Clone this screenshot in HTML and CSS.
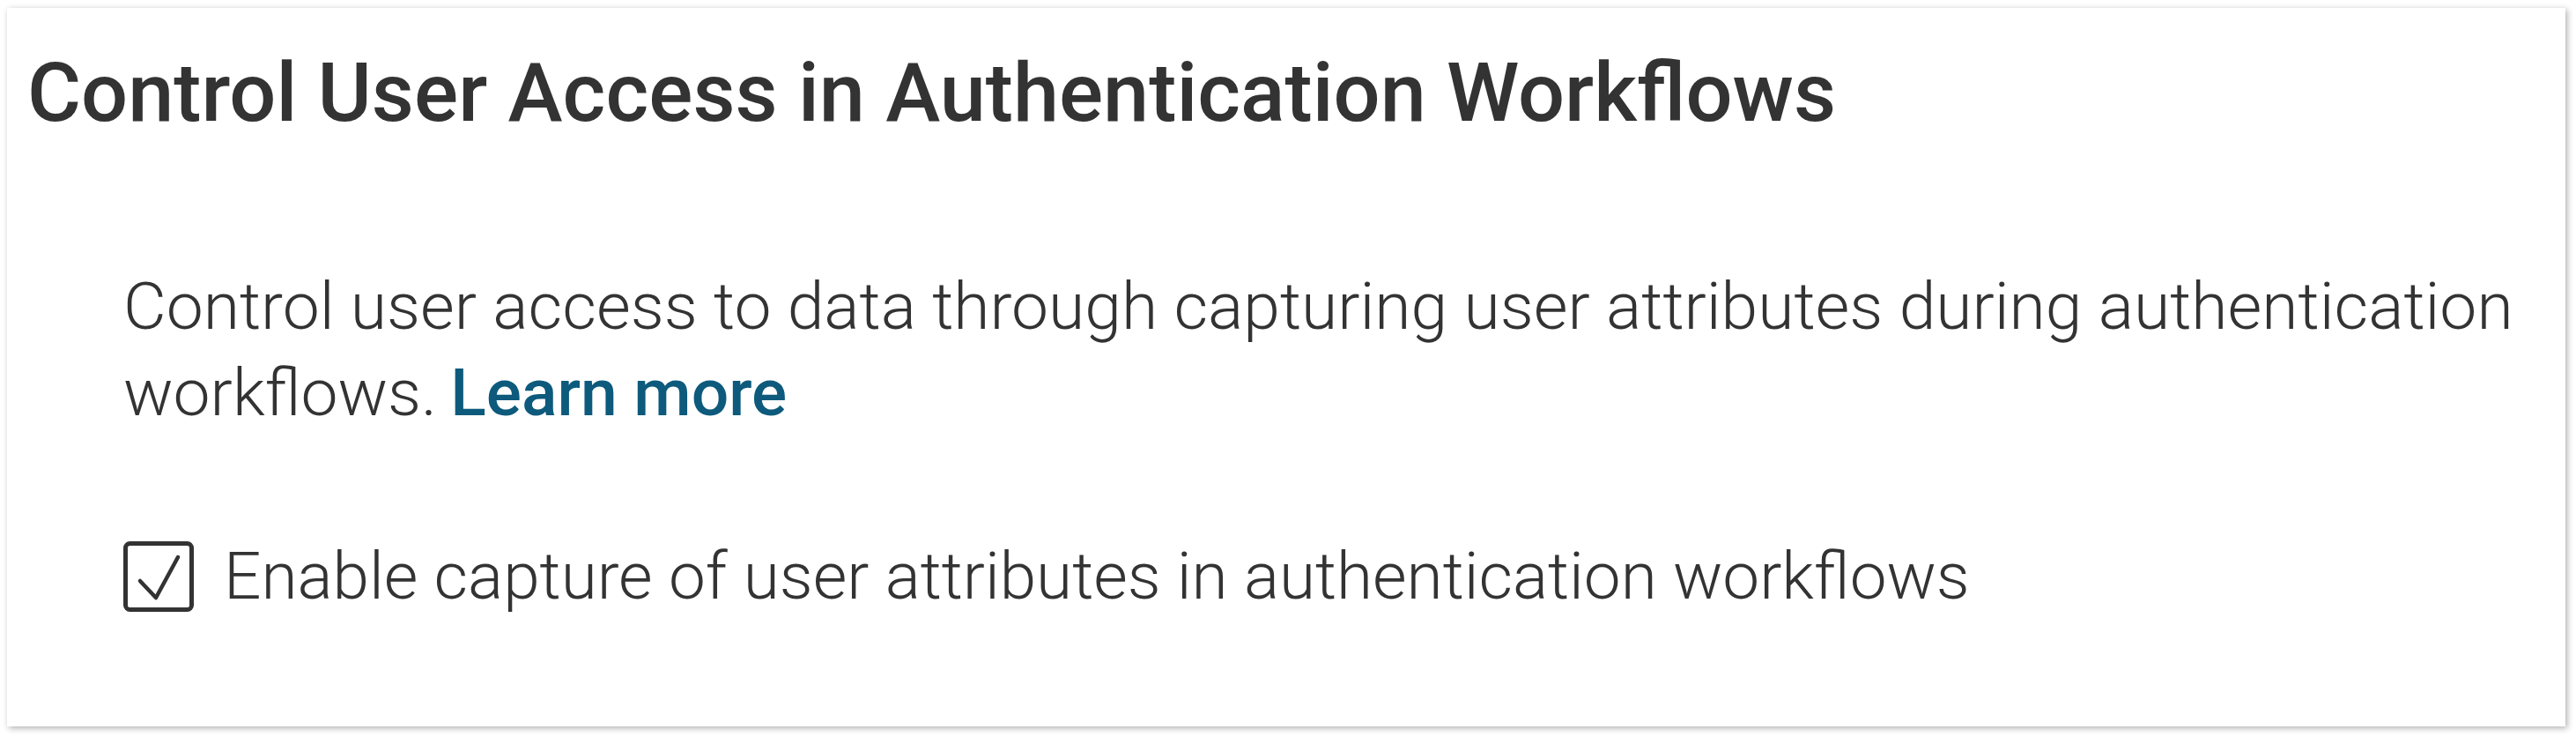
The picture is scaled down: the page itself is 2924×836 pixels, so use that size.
FILE: index.html
```html
<!DOCTYPE html>
<html lang="en">
<head>
<meta charset="utf-8">
<title>Control User Access in Authentication Workflows</title>
<link rel="stylesheet" href="styles.css">
</head>
<body>
<section class="card">
  <h1 class="title">Control User Access in Authentication Workflows</h1>
  <div class="content">
    <p class="desc">Control user access to data through capturing user attributes during authentication workflows. <a class="link" href="#">Learn more</a></p>
    <label class="option">
      <svg class="check" viewBox="0 0 80 80" width="80" height="80" aria-hidden="true">
        <rect x="2.5" y="2.5" width="75" height="75" rx="5" ry="5" fill="none" stroke="#333" stroke-width="5"/>
        <path d="M19 45 L37 64 L62 18" fill="none" stroke="#333" stroke-width="4.5" stroke-linecap="round" stroke-linejoin="round"/>
      </svg>
      <span class="option-text">Enable capture of user attributes in authentication workflows</span>
    </label>
  </div>
</section>
</body>
</html>
```

FILE: styles.css
```css
html, body {
  margin: 0;
  padding: 0;
  background: #ffffff;
}

body {
  padding: 9px 12px 12px 8px;
  font-family: Roboto, "Liberation Sans", sans-serif;
  color: #333333;
}

.card {
  box-sizing: border-box;
  width: 2904px;
  height: 815px;
  background: #ffffff;
  box-shadow: 2px 2px 7px rgba(0, 0, 0, 0.32);
  padding: 46px 0 0 23px;
}

.title {
  margin: 0;
  font-size: 93.6px;
  line-height: 100px;
  font-weight: 500;
  color: #333333;
  white-space: nowrap;
}

.content {
  padding: 143px 0 0 109px;
}

.desc {
  margin: 0;
  font-size: 75px;
  line-height: 98px;
  font-weight: 300;
  color: #333333;
}

.link {
  color: #0d5a7c;
  font-weight: 500;
  text-decoration: none;
  margin-left: -3px;
}

.option {
  margin-top: 111px;
  display: flex;
  align-items: center;
  gap: 34px;
  font-size: 74.7px;
  line-height: 98px;
  font-weight: 300;
}

.check {
  flex: none;
  display: block;
}
```
